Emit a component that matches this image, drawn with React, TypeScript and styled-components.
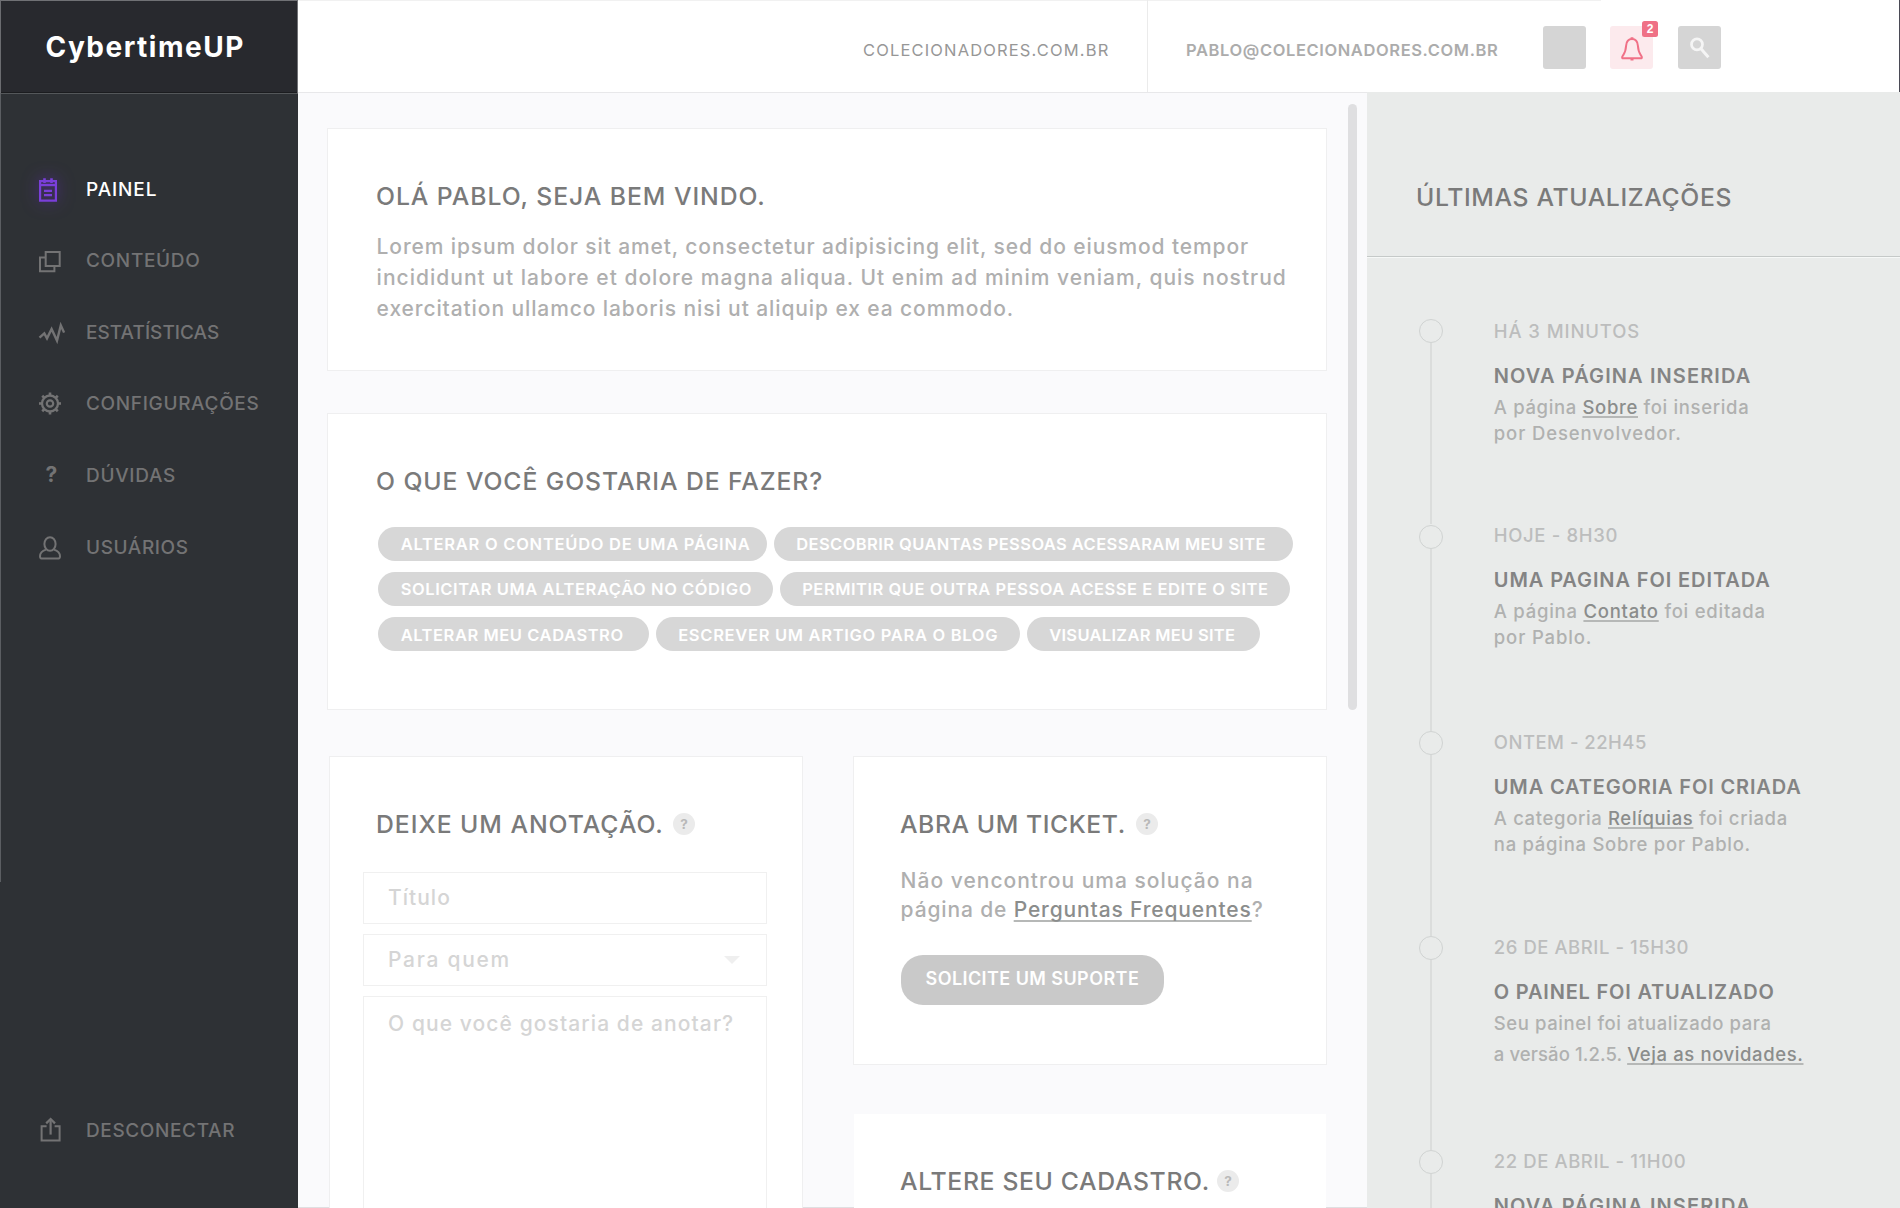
import React from "react";
import styled, { createGlobalStyle, css } from "styled-components";

const GlobalStyle = createGlobalStyle`
  *, *::before, *::after { box-sizing: border-box; }
  html, body { margin: 0; padding: 0; overflow: hidden; }
  body {
    font-family: "Inter", "Liberation Sans", sans-serif;
    font-weight: 500;
    color: #808080;
    background: #fff;
  }
  h1, h2, h3, p, ul { margin: 0; padding: 0; }
  ul { list-style: none; }
`;

const Page = styled.div`
  display: grid;
  grid-template-columns: 298px 1fr;
  width: 1900px;
  height: 1208px;
  overflow: hidden;
`;

const Text = styled.span<{ $track?: number }>`
  display: block;
  white-space: nowrap;
  letter-spacing: ${({ $track = 0 }) => $track}px;
`;

/* ---------- sidebar ---------- */

const Sidebar = styled.aside`
  display: flex;
  flex-direction: column;
  height: 1208px;
  padding-bottom: 41.4px;
  background: linear-gradient(#5b5e62, #5b5e62) 0 0 / 1px 882px no-repeat, #2e3135;
`;

const Brand = styled.h1`
  display: flex;
  align-items: center;
  height: 94px;
  padding: 0 0 0 44.5px;
  color: #fff;
  font-size: 28px;
  font-weight: 700;
  line-height: 34px;
  background: #28292e;
  border-top: 1px solid #707175;
  border-left: 1px solid #6b6c70;
  border-right: 1px solid #707175;
  border-bottom: 1px solid #54575a;
  box-shadow: inset 0 -1px 0 #1b1c1f;
`;

const Nav = styled.nav`
  display: flex;
  flex-direction: column;
  padding-top: 59.8px;
`;

const NavItem = styled.a<{ $active?: boolean }>`
  display: flex;
  align-items: center;
  gap: 21px;
  height: 71.6px;
  padding-left: 37px;
  font-size: 19px;
  line-height: 24px;
  color: ${({ $active }) => ($active ? "#fff" : "#737374")};
`;

const NavIcon = styled.span<{ $active?: boolean }>`
  display: flex;
  align-items: center;
  justify-content: center;
  width: 28px;
  height: 28px;
  ${({ $active }) =>
    $active &&
    css`
      color: #7a3fd9;
      filter: drop-shadow(0 0 8px rgba(110, 40, 220, 0.6));
    `}
  svg { display: block; }
`;

const Question = styled.b`
  padding: 0 0 2px 1px;
  font-size: 21px;
  line-height: 26px;
`;

const SignOut = styled.div`
  margin-top: auto;
`;

/* ---------- header ---------- */

const Workspace = styled.div`
  display: flex;
  flex-direction: column;
`;

const Header = styled.header`
  display: flex;
  height: 93px;
  background: linear-gradient(#f1f1f1, #f1f1f1) 0 0 / 1303px 1px no-repeat, #fff;
  border-bottom: 1px solid #e8e8ea;
  border-right: 1px solid #4a4a55;
`;

const HeaderCell = styled.div<{ $width: number; $indent: number; $divided?: boolean }>`
  display: flex;
  align-items: center;
  width: ${({ $width }) => $width}px;
  padding: 8px 0 0 ${({ $indent }) => $indent}px;
  font-size: 16.5px;
  font-weight: ${({ $divided }) => ($divided ? 400 : 600)};
  line-height: 20px;
  color: ${({ $divided }) => ($divided ? "#979797" : "#acacac")};
  border-right: ${({ $divided }) => ($divided ? "1px solid #ebebeb" : "0")};
`;

const Tools = styled.div`
  display: flex;
  gap: 24px;
  padding-top: 26px;
`;

const ToolButton = styled.div<{ $alert?: boolean }>`
  position: relative;
  display: flex;
  align-items: center;
  justify-content: center;
  width: 43px;
  height: 43px;
  border-radius: 3px;
  color: ${({ $alert }) => ($alert ? "#f07187" : "#f5f5f5")};
  background: ${({ $alert }) => ($alert ? "#fceaed" : "#d5d5d5")};
  &:last-child { margin-left: 1px; }
`;

const Count = styled.span`
  position: absolute;
  top: -5px;
  right: -5px;
  width: 16px;
  height: 16px;
  border-radius: 2.5px;
  font: 700 12px/16px "Liberation Sans", sans-serif;
  text-align: center;
  color: #fff;
  background: #ef7186;
`;

/* ---------- main column ---------- */

const Body = styled.div`
  display: flex;
  flex: 1;
`;

const Main = styled.main`
  display: flex;
  align-items: flex-start;
  width: 1069px;
  height: 1115px;
  overflow: hidden;
  background: linear-gradient(#dfdfe1, #dfdfe1) 0 100% / 100% 1px no-repeat, #fafafc;
`;

const Cards = styled.div`
  display: flex;
  flex-direction: column;
  width: 1029px;
  padding: 35px 0 0 29px;
`;

const ScrollThumb = styled.div`
  width: 9px;
  height: 606px;
  margin: 11px 0 0 21px;
  border-radius: 5px;
  background: #dfdfe1;
`;

const Card = styled.section<{ $height: number; $gap?: number; $plain?: boolean; $pad?: number }>`
  height: ${({ $height }) => $height}px;
  margin-bottom: ${({ $gap = 0 }) => $gap}px;
  padding: 52px 0 0 ${({ $pad = 46 }) => $pad}px;
  background: #fff;
  border: 1px solid ${({ $plain }) => ($plain ? "transparent" : "#efeff0")};
  background-clip: padding-box;
`;

const Split = styled.div`
  display: flex;
  justify-content: space-between;
  padding-left: 2px;
`;

const Stack = styled.div`
  display: flex;
  flex-direction: column;
  width: 474px;
`;

const TitleRow = styled.div<{ $gap?: number }>`
  display: flex;
  align-items: center;
  gap: ${({ $gap = 0 }) => $gap}px;
  height: 30px;
`;

const Title = styled.h2`
  font-size: 24.75px;
  font-weight: 500;
  line-height: 30px;
  color: #7a7a7a;
`;

const Help = styled.span`
  width: 22px;
  height: 22px;
  border-radius: 50%;
  font-size: 13.5px;
  font-weight: 700;
  line-height: 23px;
  text-align: center;
  color: #b9b9b9;
  background: #ebebeb;
`;

const Paragraph = styled.p<{ $leading: number; $top: number }>`
  margin-top: ${({ $top }) => $top}px;
  padding-left: 0.6px;
  font-size: 21px;
  line-height: ${({ $leading }) => $leading}px;
  color: #afafaf;
`;

const Link = styled.a<{ $offset?: number; $track?: number }>`
  color: #8b8d8c;
  letter-spacing: ${({ $track }) => ($track === undefined ? "inherit" : `${$track}px`)};
  text-decoration: underline #b6b8b7 2px;
  text-underline-offset: ${({ $offset = 2 }) => $offset}px;
  text-decoration-skip-ink: none;
`;

const Pills = styled.div`
  display: flex;
  flex-direction: column;
  gap: 11px;
  margin: 31px 0 0 2px;
`;

const PillRow = styled.div`
  display: flex;
  gap: 6.5px;
  &:last-child > * { padding-top: 2px; }
`;

const Pill = styled.a<{ $width: number }>`
  display: flex;
  align-items: center;
  width: ${({ $width }) => $width}px;
  height: 34px;
  padding-left: 22.7px;
  border-radius: 17px;
  font-size: 16.5px;
  font-weight: 600;
  line-height: 20px;
  color: #fff;
  background: #d7d7d7;
`;

const Form = styled.div`
  display: flex;
  flex-direction: column;
  gap: 10px;
  margin: 33px 35px 0 -13px;
`;

const Field = styled.div<{ $height: number; $multiline?: boolean }>`
  display: flex;
  align-items: ${({ $multiline }) => ($multiline ? "flex-start" : "center")};
  justify-content: space-between;
  height: ${({ $height }) => $height}px;
  padding: ${({ $multiline }) => ($multiline ? "12px" : "0")} 26px 0 24px;
  font-size: 21px;
  line-height: 30px;
  color: #d5d5d5;
  border: 1px solid #f0f0f0;
`;

const Caret = styled.i`
  border: 8px solid transparent;
  border-top-color: #efefef;
  border-bottom-width: 0;
`;

const SupportButton = styled.a`
  display: flex;
  align-items: center;
  width: 263px;
  height: 50px;
  margin: 31px 0 0 1px;
  padding: 0 0 1px 24.5px;
  border-radius: 22px;
  font-size: 18px;
  font-weight: 600;
  line-height: 22px;
  color: #fff;
  background: #c9c9c9;
`;

/* ---------- updates ---------- */

const Updates = styled.aside`
  width: 533px;
  height: 1116px;
  margin-top: -1px;
  overflow: hidden;
  background: #e9ebea;
`;

const UpdatesHead = styled.div`
  height: 165px;
  padding: 90px 0 0 49px;
  border-bottom: 1px solid #c5c9c8;
  box-shadow: 0 1px 0 #f6f8f7;
`;

const Timeline = styled.ul`
  padding: 62px 0 0 52px;
`;

const Event = styled.li<{ $height: number }>`
  display: flex;
  gap: 50.8px;
  height: ${({ $height }) => $height}px;
`;

const Rail = styled.div<{ $drop?: number }>`
  display: flex;
  flex-direction: column;
  align-items: center;
  width: 24px;
  margin: ${({ $drop = 0 }) => $drop}px 0 -1px;
  &::after {
    content: "";
    flex: 1;
    width: 2px;
    background: #dbdddc;
  }
`;

const Dot = styled.span`
  width: 24px;
  height: 24px;
  border: 1px solid #d0d3d2;
  border-radius: 50%;
`;

const Time = styled.div`
  font-size: 18.5px;
  line-height: 24px;
  color: #bcbdbd;
`;

const EventTitle = styled.h3`
  margin-top: 20.5px;
  font-size: 20px;
  font-weight: 600;
  line-height: 24px;
  color: #848484;
`;

const EventText = styled.div<{ $gap: number }>`
  display: flex;
  flex-direction: column;
  gap: ${({ $gap }) => $gap}px;
  margin-top: 6px;
  font-size: 18.5px;
  line-height: 26px;
  color: #b0b1b0;
`;

/* ---------- icons ---------- */

const Svg = ({ size = 28, width = 2, children }: { size?: number; width?: number; children: React.ReactNode }) => (
  <svg width={size} height={size} viewBox={`0 0 ${size} ${size}`} fill="none" stroke="currentColor" strokeWidth={width}>
    {children}
  </svg>
);

const NotesIcon = () => (
  <Svg width={2.2}>
    <path d="M3.1 5.2H18.9V24.6H3.1Z" />
    <path d="M3 9H19" strokeWidth={2.4} />
    <path d="M7.5 2.2V7M14.5 2.2V7" strokeWidth={2.6} />
    <path d="M7 14.8H15M7 19.2H15" />
  </Svg>
);

const CopyIcon = () => (
  <Svg>
    <path d="M8.7 5H22.7V19H8.7Z" />
    <path d="M8 10.6H3V24.2H17.4V19" />
  </Svg>
);

const PulseIcon = () => (
  <Svg width={2.4}>
    <path d="M2.5 18.6L7.3 14.4L10 19.4L14.6 10L20 21.6L23.8 6.4L27.1 13.6" />
  </Svg>
);

const GearIcon = () => (
  <Svg>
    <circle cx="13" cy="13.5" r="8" strokeWidth={2.3} />
    <circle cx="13" cy="13.5" r="3.2" strokeWidth={2.2} />
    {[0, 45, 90, 135, 180, 225, 270, 315].map((a) => (
      <path key={a} d="M13 2.5V5.5" strokeWidth={2.6} transform={`rotate(${a} 13 13.5)`} />
    ))}
  </Svg>
);

const UserIcon = () => (
  <Svg>
    <ellipse cx="13" cy="10" rx="5.6" ry="6.8" />
    <path d="M9 15.6C5.2 16.8 3 19 3 22.3C3 23.8 3.4 24.4 4.4 24.4H21.6C22.6 24.4 23 23.8 23 22.3C23 19 20.8 16.8 17 15.6" />
  </Svg>
);

const ShareIcon = () => (
  <Svg>
    <path d="M9.6 9.3H4.6V23.4H22.6V9.3H17.6" />
    <path d="M13.6 17.6V2.4" strokeWidth={2.2} />
    <path d="M9.2 6.4L13.6 2L18 6.4" strokeWidth={2.2} />
  </Svg>
);

const BellIcon = () => (
  <Svg size={26} width={2}>
    <path
      d="M3.3 23.2C2.4 21.9 3.4 21.2 4.4 19.8C6.5 16.9 6.8 14.8 7.1 10.8C7.4 6.4 9.4 4 13 4C16.6 4 18.6 6.4 18.9 10.8C19.2 14.8 19.5 16.9 21.6 19.8C22.6 21.2 23.6 21.9 22.7 23.2Z"
      strokeLinejoin="round"
    />
    <path d="M11.6 3.2H14.4M11.5 24.6H14.5" />
  </Svg>
);

const SearchIcon = () => (
  <Svg size={43} width={2.7}>
    <circle cx="19" cy="18.4" r="5.5" />
    <path d="M22.8 22.6L30.4 31.2" strokeWidth={3} />
  </Svg>
);

/* ---------- data ---------- */

const navItems = [
  { label: "PAINEL", track: 0.9, icon: <NotesIcon />, active: true },
  { label: "CONTEÚDO", track: 0.67, icon: <CopyIcon /> },
  { label: "ESTATÍSTICAS", track: 0.03, icon: <PulseIcon /> },
  { label: "CONFIGURAÇÕES", track: 0.66, icon: <GearIcon /> },
  { label: "DÚVIDAS", track: 0.7, icon: <Question>?</Question> },
  { label: "USUÁRIOS", track: 0.6, icon: <UserIcon /> },
];

const actions = [
  [
    { label: "ALTERAR O CONTEÚDO DE UMA PÁGINA", width: 389, track: 0.74 },
    { label: "DESCOBRIR QUANTAS PESSOAS ACESSARAM MEU SITE", width: 519.5, track: 0.42 },
  ],
  [
    { label: "SOLICITAR UMA ALTERAÇÃO NO CÓDIGO", width: 395, track: 0.57 },
    { label: "PERMITIR QUE OUTRA PESSOA ACESSE E EDITE O SITE", width: 510, track: 0.53 },
  ],
  [
    { label: "ALTERAR MEU CADASTRO", width: 271, track: 0.56 },
    { label: "ESCREVER UM ARTIGO PARA O BLOG", width: 364.5, track: 0.69 },
    { label: "VISUALIZAR MEU SITE", width: 233, track: 0.3 },
  ],
];

type Line = { track: number; content: React.ReactNode };
type Update = {
  time: string;
  timeTrack: number;
  title: string;
  titleTrack: number;
  lines: Line[];
  height: number;
  gap?: number;
  drop?: number;
};

const updates: Update[] = [
  {
    time: "HÁ 3 MINUTOS", timeTrack: 0.9, title: "NOVA PÁGINA INSERIDA", titleTrack: 1.11, height: 204,
    lines: [
      { track: 0.65, content: <>A página <Link>Sobre</Link> foi inserida</> },
      { track: 0.87, content: "por Desenvolvedor." },
    ],
  },
  {
    time: "HOJE - 8H30", timeTrack: 0.64, title: "UMA PAGINA FOI EDITADA", titleTrack: 0.9, height: 207, drop: 2,
    lines: [
      { track: 0.75, content: <>A página <Link>Contato</Link> foi editada</> },
      { track: 0.86, content: "por Pablo." },
    ],
  },
  {
    time: "ONTEM - 22H45", timeTrack: 0.48, title: "UMA CATEGORIA FOI CRIADA", titleTrack: 0.85, height: 205, drop: 1,
    lines: [
      { track: 0.64, content: <>A categoria <Link>Relíquias</Link> foi criada</> },
      { track: 0.72, content: "na página Sobre por Pablo." },
    ],
  },
  {
    time: "26 DE ABRIL - 15H30", timeTrack: 0.54, title: "O PAINEL FOI ATUALIZADO", titleTrack: 0.81, height: 214, gap: 5, drop: 1,
    lines: [
      { track: 0.58, content: "Seu painel foi atualizado para" },
      { track: 0.1, content: <>a versão 1.2.5. <Link $track={0.6}>Veja as novidades.</Link></> },
    ],
  },
  {
    time: "22 DE ABRIL - 11H00", timeTrack: 0.58, title: "NOVA PÁGINA INSERIDA", titleTrack: 1.11, height: 204, drop: 1,
    lines: [],
  },
];

export default function App() {
  return (
    <Page>
      <GlobalStyle />
      <Sidebar>
        <Brand>
          <Text $track={1.5}>CybertimeUP</Text>
        </Brand>
        <Nav>
          {navItems.map((item) => (
            <NavItem key={item.label} $active={item.active}>
              <NavIcon $active={item.active}>{item.icon}</NavIcon>
              <Text $track={item.track}>{item.label}</Text>
            </NavItem>
          ))}
        </Nav>
        <SignOut>
          <NavItem>
            <NavIcon><ShareIcon /></NavIcon>
            <Text $track={0.62}>DESCONECTAR</Text>
          </NavItem>
        </SignOut>
      </Sidebar>

      <Workspace>
        <Header>
          <HeaderCell $width={850} $indent={565} $divided>
            <Text $track={1.15}>COLECIONADORES.COM.BR</Text>
          </HeaderCell>
          <HeaderCell $width={395} $indent={38}>
            <Text $track={0.61}>PABLO@COLECIONADORES.COM.BR</Text>
          </HeaderCell>
          <Tools>
            <ToolButton />
            <ToolButton $alert>
              <BellIcon />
              <Count>2</Count>
            </ToolButton>
            <ToolButton>
              <SearchIcon />
            </ToolButton>
          </Tools>
        </Header>

        <Body>
          <Main>
            <Cards>
              <Card $height={243} $gap={42} $pad={48}>
                <Title><Text $track={0.94}>OLÁ PABLO, SEJA BEM VINDO.</Text></Title>
                <Paragraph $leading={31} $top={20}>
                  <Text $track={0.89}>Lorem ipsum dolor sit amet, consectetur adipisicing elit, sed do eiusmod tempor</Text>
                  <Text $track={1.01}>incididunt ut labore et dolore magna aliqua. Ut enim ad minim veniam, quis nostrud</Text>
                  <Text $track={0.9}>exercitation ullamco laboris nisi ut aliquip ex ea commodo.</Text>
                </Paragraph>
              </Card>

              <Card $height={297} $gap={46} $pad={48}>
                <Title><Text $track={0.91}>O QUE VOCÊ GOSTARIA DE FAZER?</Text></Title>
                <Pills>
                  {actions.map((row, i) => (
                    <PillRow key={i}>
                      {row.map((a) => (
                        <Pill key={a.label} $width={a.width}>
                          <Text $track={a.track}>{a.label}</Text>
                        </Pill>
                      ))}
                    </PillRow>
                  ))}
                </Pills>
              </Card>

              <Split>
                <Stack>
                  <Card $height={560}>
                    <TitleRow $gap={9.3}>
                      <Title><Text $track={0.95}>DEIXE UM ANOTAÇÃO.</Text></Title>
                      <Help>?</Help>
                    </TitleRow>
                    <Form>
                      <Field $height={52}><Text $track={1.02}>Título</Text></Field>
                      <Field $height={52}><Text $track={1.72}>Para quem</Text><Caret /></Field>
                      <Field $height={330} $multiline><Text $track={1.09}>O que você gostaria de anotar?</Text></Field>
                    </Form>
                  </Card>
                </Stack>
                <Stack>
                  <Card $height={309} $gap={48}>
                    <TitleRow $gap={10.3}>
                      <Title><Text $track={0.56}>ABRA UM TICKET.</Text></Title>
                      <Help>?</Help>
                    </TitleRow>
                    <Paragraph $leading={29} $top={26.5}>
                      <Text $track={1.01}>Não vencontrou uma solução na</Text>
                      <Text $track={0.86}>página de <Link $offset={3}>Perguntas Frequentes</Link>?</Text>
                    </Paragraph>
                    <SupportButton><Text $track={0.43}>SOLICITE UM SUPORTE</Text></SupportButton>
                  </Card>
                  <Card $height={200} $plain>
                    <TitleRow $gap={7.3}>
                      <Title><Text $track={0.65}>ALTERE SEU CADASTRO.</Text></Title>
                      <Help>?</Help>
                    </TitleRow>
                  </Card>
                </Stack>
              </Split>
            </Cards>
            <ScrollThumb />
          </Main>

          <Updates>
            <UpdatesHead>
              <Title><Text $track={0.62}>ÚLTIMAS ATUALIZAÇÕES</Text></Title>
            </UpdatesHead>
            <Timeline>
              {updates.map((u) => (
                <Event key={u.time} $height={u.height}>
                  <Rail $drop={u.drop}><Dot /></Rail>
                  <div>
                    <Time><Text $track={u.timeTrack}>{u.time}</Text></Time>
                    <EventTitle><Text $track={u.titleTrack}>{u.title}</Text></EventTitle>
                    <EventText $gap={u.gap ?? 0}>
                      {u.lines.map((line, i) => (
                        <Text key={i} $track={line.track}>{line.content}</Text>
                      ))}
                    </EventText>
                  </div>
                </Event>
              ))}
            </Timeline>
          </Updates>
        </Body>
      </Workspace>
    </Page>
  );
}
